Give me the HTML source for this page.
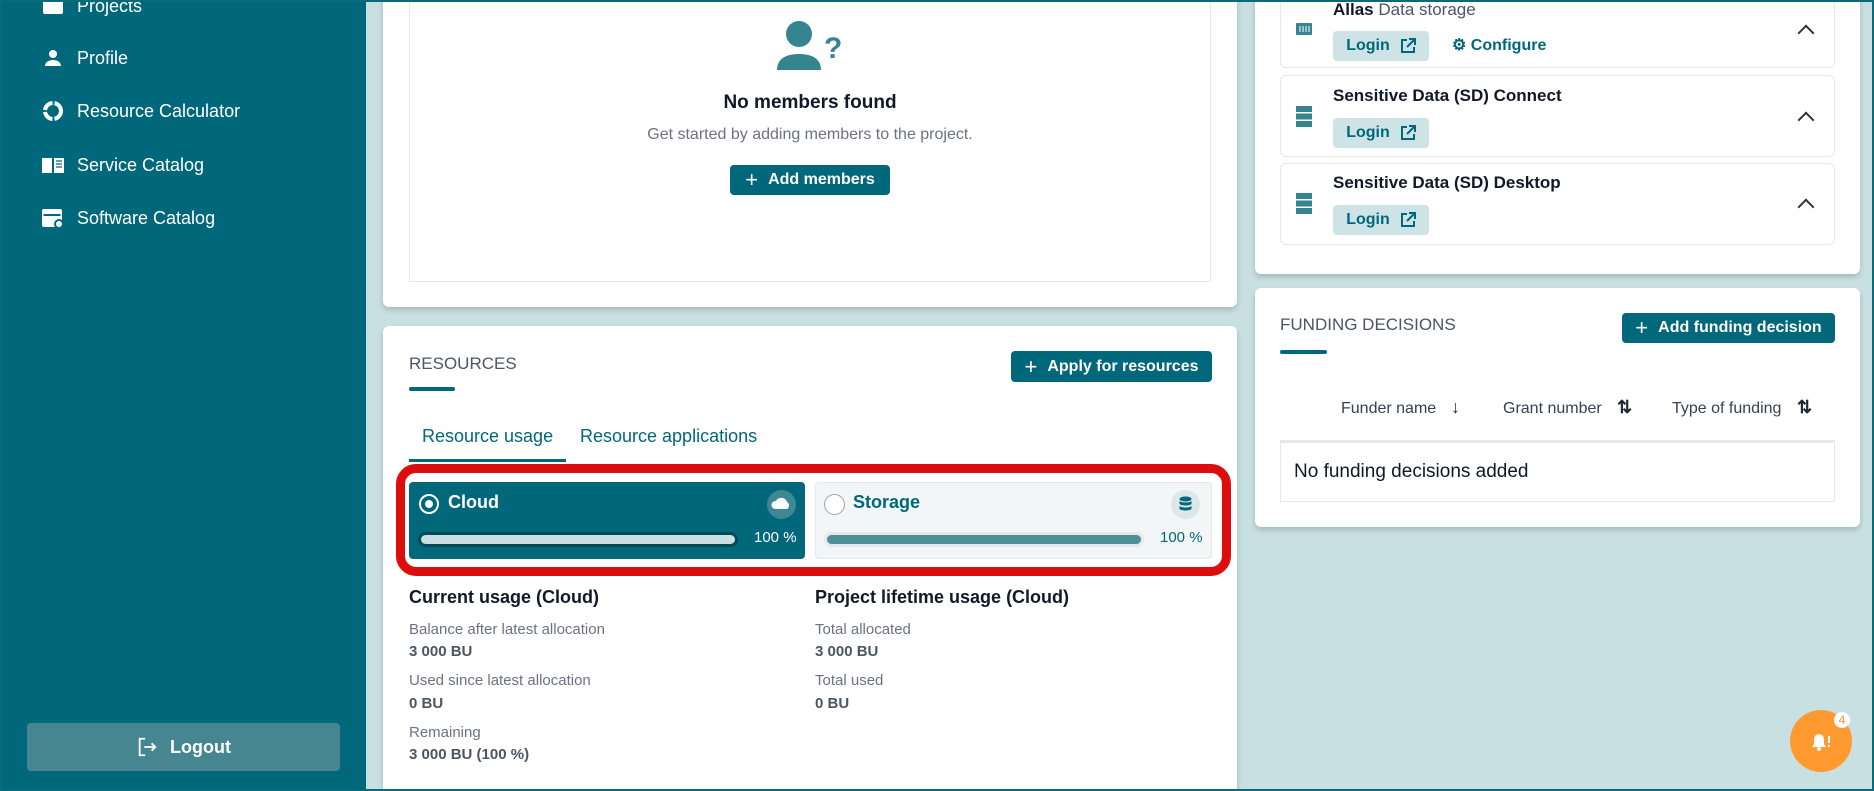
<!DOCTYPE html>
<html style="overflow:hidden;width:1874px;height:791px"><head><meta charset="utf-8"><style>
*{box-sizing:border-box;margin:0;padding:0}
body{width:1874px;height:791px;overflow:hidden;background:#c9e0e3;font-family:"Liberation Sans",sans-serif;position:relative;color:#1f2933}
.a{position:absolute}
.side{left:0;top:0;width:366px;height:791px;background:#00687a}
.nav{left:41px;color:#fff;font-size:18px;display:flex;align-items:center;gap:12px;height:24px}
.nav svg{width:24px;height:24px;fill:#fff}
.card{background:#fff;border-radius:6px;box-shadow:0 3px 6px rgba(0,0,0,.18)}
.btn{background:#00687a;color:#fff;font-weight:bold;font-size:16px;border-radius:4px;display:flex;align-items:center;justify-content:center;gap:10px}
.lbl{font-size:15px;color:#6b7280}
.val{font-size:15px;color:#4b5563;font-weight:bold}
.item{left:1280px;width:555px;border:1px solid #e5e7eb;border-radius:6px;background:#fff}
.login{background:#cde3e6;color:#00687a;font-weight:bold;font-size:16px;border-radius:4px;width:96px;height:30px;display:flex;align-items:center;justify-content:center;gap:10px}
.t{font-weight:bold;font-size:17px;color:#111827}
.chev{left:1800px;width:12px;height:12px;border-left:2px solid #333;border-top:2px solid #333;transform:rotate(45deg)}
</style></head><body>
<div class="a side"></div>
<div class="a nav" style="top:-6px"><svg viewBox="0 0 24 24"><rect x="2" y="4" width="20" height="16" rx="2"/></svg>Projects</div>
<div class="a nav" style="top:46px"><svg viewBox="0 0 24 24"><circle cx="12" cy="8" r="4"/><path d="M4 20c0-4 4-6 8-6s8 2 8 6z"/></svg>Profile</div>
<div class="a nav" style="top:99px"><svg viewBox="0 0 24 24"><circle cx="12" cy="12" r="8" fill="none" stroke="#fff" stroke-width="4" stroke-dasharray="11 2"/></svg>Resource Calculator</div>
<div class="a nav" style="top:153px"><svg viewBox="0 0 24 24"><path d="M1 5h10v15H1zM13 5h10v15H13z"/><path d="M15 8h6M15 11h6M15 14h6" stroke="#00687a" stroke-width="1.2"/></svg>Service Catalog</div>
<div class="a nav" style="top:206px"><svg viewBox="0 0 24 24"><rect x="1" y="3" width="20" height="18" rx="2"/><rect x="2.5" y="8" width="17" height="2" fill="#00687a"/><circle cx="18" cy="18" r="5" fill="#00687a"/><circle cx="18" cy="18" r="3"/></svg>Software Catalog</div>
<div class="a" style="left:27px;top:723px;width:313px;height:48px;background:#468690;border-radius:4px;color:#fff;font-weight:bold;font-size:18px;display:flex;align-items:center;justify-content:center;gap:12px"><svg width="22" height="22" viewBox="0 0 24 24" fill="none" stroke="#fff" stroke-width="2"><path d="M10 3H4v18h6M9 12h12M17 8l4 4-4 4"/></svg>Logout</div>

<div class="a card" style="left:383px;top:-10px;width:854px;height:317px"></div>
<div class="a" style="left:409px;top:-10px;width:802px;height:292px;border:1px solid #e5e7eb"></div>
<svg class="a" style="left:772px;top:18px" width="76" height="56" viewBox="0 0 76 56"><circle cx="27" cy="16" r="13" fill="#348590"/><path d="M5 52c0-12 10-16 22-16s22 4 22 16z" fill="#348590"/><text x="52" y="40" font-size="30" font-weight="bold" fill="#348590" font-family="Liberation Sans">?</text></svg>
<div class="a" style="left:409px;width:802px;top:92px;text-align:center;font-size:19px;color:#111827;font-weight:bold">No members found</div>
<div class="a" style="left:409px;width:802px;top:126px;text-align:center;font-size:16px;color:#6b7280">Get started by adding members to the project.</div>
<div class="a btn" style="left:730px;top:165px;width:160px;height:30px"><span style="font-size:22px;font-weight:normal">+</span>Add members</div>

<div class="a card" style="left:383px;top:326px;width:854px;height:465px;border-radius:6px 6px 0 0"></div>
<div class="a" style="left:409px;top:354px;font-size:17px;color:#4b5563">RESOURCES</div>
<div class="a" style="left:409px;top:387px;width:46px;height:4px;background:#00687a;border-radius:2px"></div>
<div class="a btn" style="left:1011px;top:351px;width:201px;height:31px"><span style="font-size:22px;font-weight:normal">+</span>Apply for resources</div>
<div class="a" style="left:422px;top:426px;font-size:18px;color:#00687a">Resource usage</div>
<div class="a" style="left:580px;top:426px;font-size:18px;color:#00687a">Resource applications</div>
<div class="a" style="left:409px;top:459px;width:157px;height:3px;background:#00687a"></div>
<div class="a" style="left:396px;top:464px;width:835px;height:112px;border:9px solid #dd0d0d;border-radius:20px"></div>
<div class="a" style="left:409px;top:482px;width:396px;height:77px;background:#00687a;border-radius:4px"></div>
<div class="a" style="left:419px;top:494px;width:20px;height:20px;border:2px solid #fff;border-radius:50%"><div style="margin:4px;width:8px;height:8px;background:#fff;border-radius:50%"></div></div>
<div class="a" style="left:448px;top:492px;font-size:18px;font-weight:bold;color:#fff">Cloud</div>
<div class="a" style="left:767px;top:490px;width:29px;height:29px;border-radius:50%;background:#3d8894"><svg width="29" height="29" viewBox="0 0 29 29"><path d="M8 19a4 4 0 0 1 1-8 6 6 0 0 1 11 1 4 4 0 0 1 0 7z" fill="#fff"/></svg></div>
<div class="a" style="left:418px;top:532px;width:320px;height:15px;background:#034b57;border-radius:8px;padding:3px"><div style="height:9px;background:#c9dfe2;border-radius:5px"></div></div>
<div class="a" style="left:754px;top:529px;font-size:15px;color:#fff">100 %</div>
<div class="a" style="left:815px;top:482px;width:397px;height:77px;background:#f2f6f7;border:1px solid #e5e7eb;border-radius:4px"></div>
<div class="a" style="left:824px;top:494px;width:21px;height:21px;border:1px solid #9ca3af;border-radius:50%;background:#fff"></div>
<div class="a" style="left:853px;top:492px;font-size:18px;font-weight:bold;color:#00687a">Storage</div>
<div class="a" style="left:1171px;top:490px;width:29px;height:29px;border-radius:50%;background:#dde6e8"><svg width="29" height="29" viewBox="0 0 29 29" fill="#00687a"><ellipse cx="14.5" cy="9" rx="6" ry="2.5"/><path d="M8.5 11c2 2 10 2 12 0v3c-2 2-10 2-12 0zM8.5 16c2 2 10 2 12 0v3c-2 2-10 2-12 0z"/></svg></div>
<div class="a" style="left:824px;top:532px;width:320px;height:15px;background:#e5e9ea;border-radius:8px;padding:3px"><div style="height:9px;background:#4f8e98;border-radius:5px"></div></div>
<div class="a" style="left:1160px;top:529px;font-size:15px;color:#00687a">100 %</div>

<div class="a" style="left:409px;top:587px;font-size:18px;font-weight:bold;color:#111827">Current usage (Cloud)</div>
<div class="a lbl" style="left:409px;top:621px">Balance after latest allocation</div>
<div class="a val" style="left:409px;top:643px">3 000 BU</div>
<div class="a lbl" style="left:409px;top:672px">Used since latest allocation</div>
<div class="a val" style="left:409px;top:695px">0 BU</div>
<div class="a lbl" style="left:409px;top:724px">Remaining</div>
<div class="a val" style="left:409px;top:746px">3 000 BU (100 %)</div>
<div class="a" style="left:815px;top:587px;font-size:18px;font-weight:bold;color:#111827">Project lifetime usage (Cloud)</div>
<div class="a lbl" style="left:815px;top:621px">Total allocated</div>
<div class="a val" style="left:815px;top:643px">3 000 BU</div>
<div class="a lbl" style="left:815px;top:672px">Total used</div>
<div class="a val" style="left:815px;top:695px">0 BU</div>

<div class="a card" style="left:1255px;top:-10px;width:605px;height:284px"></div>
<div class="a item" style="top:-10px;height:78px"></div>
<div class="a item" style="top:75px;height:82px"></div>
<div class="a item" style="top:163px;height:82px"></div>
<svg class="a" style="left:1296px;top:22px" width="16" height="14"><rect x="0" y="1" width="16" height="12" rx="1" fill="#348590"/><path d="M4 4v6M7 4v6M10 4v6M13 4v6" stroke="#fff"/></svg>
<svg class="a" style="left:1296px;top:106px" width="16" height="21" fill="#348590"><rect y="0" width="16" height="6"/><rect y="7.5" width="16" height="6"/><rect y="15" width="16" height="6"/></svg>
<svg class="a" style="left:1296px;top:193px" width="16" height="21" fill="#348590"><rect y="0" width="16" height="6"/><rect y="7.5" width="16" height="6"/><rect y="15" width="16" height="6"/></svg>
<div class="a t" style="left:1333px;top:0px">Allas <span style="font-weight:normal;color:#4b5563">Data storage</span></div>
<div class="a login" style="left:1333px;top:31px">Login <svg width="16" height="16" viewBox="0 0 16 16" fill="none" stroke="#00687a" stroke-width="2"><path d="M7 2H2v12h12V9M9 1h6v6M15 1L7 9"/></svg></div>
<div class="a" style="left:1452px;top:35px;font-size:16px;font-weight:bold;color:#00687a">⚙ Configure</div>
<div class="a t" style="left:1333px;top:86px">Sensitive Data (SD) Connect</div>
<div class="a login" style="left:1333px;top:118px">Login <svg width="16" height="16" viewBox="0 0 16 16" fill="none" stroke="#00687a" stroke-width="2"><path d="M7 2H2v12h12V9M9 1h6v6M15 1L7 9"/></svg></div>
<div class="a t" style="left:1333px;top:173px">Sensitive Data (SD) Desktop</div>
<div class="a login" style="left:1333px;top:205px">Login <svg width="16" height="16" viewBox="0 0 16 16" fill="none" stroke="#00687a" stroke-width="2"><path d="M7 2H2v12h12V9M9 1h6v6M15 1L7 9"/></svg></div>
<div class="a chev" style="top:27px"></div>
<div class="a chev" style="top:114px"></div>
<div class="a chev" style="top:201px"></div>

<div class="a card" style="left:1255px;top:288px;width:605px;height:239px"></div>
<div class="a" style="left:1280px;top:315px;font-size:17px;color:#4b5563">FUNDING DECISIONS</div>
<div class="a" style="left:1280px;top:350px;width:47px;height:4px;background:#00687a;border-radius:2px"></div>
<div class="a btn" style="left:1622px;top:313px;width:213px;height:30px"><span style="font-size:22px;font-weight:normal">+</span>Add funding decision</div>
<div class="a" style="left:1341px;top:400px;font-size:16px;color:#374151">Funder name</div>
<div class="a" style="left:1451px;top:397px;font-size:18px;font-weight:bold">↓</div>
<div class="a" style="left:1503px;top:400px;font-size:16px;color:#374151">Grant number</div>
<div class="a" style="left:1617px;top:397px;font-size:18px;font-weight:bold">⇅</div>
<div class="a" style="left:1672px;top:400px;font-size:16px;color:#374151">Type of funding</div>
<div class="a" style="left:1797px;top:397px;font-size:18px;font-weight:bold">⇅</div>
<div class="a" style="left:1280px;top:440px;width:555px;height:62px;border:1px solid #e5e7eb;border-top:3px solid #e5e7eb"></div>
<div class="a" style="left:1294px;top:461px;font-size:19px;color:#111827">No funding decisions added</div>

<div class="a" style="left:1790px;top:710px;width:62px;height:62px;border-radius:50%;background:#ff9a30;display:flex;align-items:center;justify-content:center"><svg width="26" height="26" viewBox="0 0 26 26" fill="#fff"><path d="M4 19h14l-2-3v-5a5 5 0 0 0-10 0v5z"/><circle cx="11" cy="21" r="2"/><rect x="20" y="8" width="2" height="7"/><rect x="20" y="17" width="2" height="2"/></svg></div>
<div class="a" style="left:1834px;top:712px;width:16px;height:16px;border-radius:50%;background:#fff;color:#ff9a30;font-size:12px;text-align:center;line-height:16px">4</div>
<div class="a" style="left:0;top:0;width:1874px;height:791px;border:2px solid #0a6a78;pointer-events:none"></div>
</body></html>
